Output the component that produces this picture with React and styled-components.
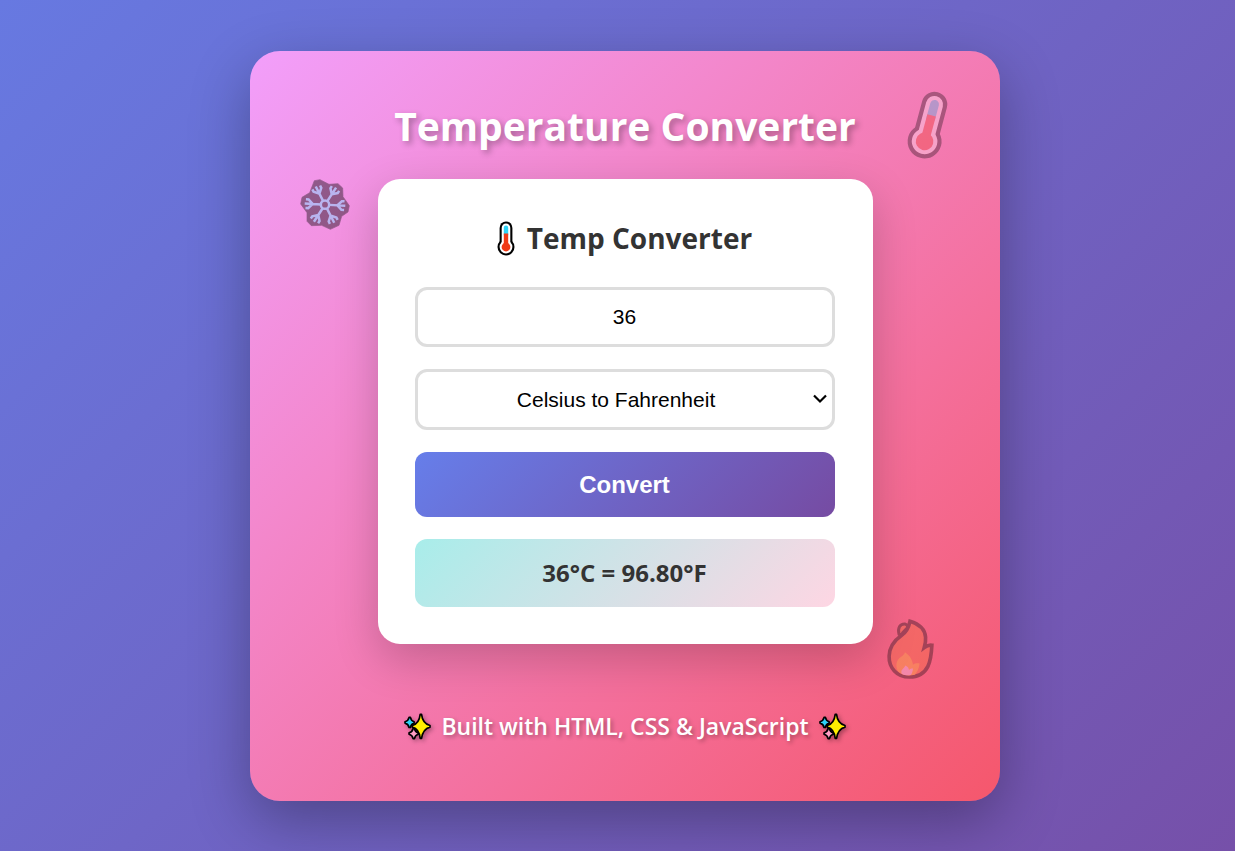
import React, { useState } from "react";
import styled, { createGlobalStyle, css } from "styled-components";

const GlobalStyle = createGlobalStyle`
  * {
    box-sizing: border-box;
    margin: 0;
    padding: 0;
  }
  body {
    font-family: "Segoe UI", "Open Sans", "Noto Sans", sans-serif;
  }
`;

const Page = styled.main`
  display: flex;
  justify-content: center;
  align-items: center;
  min-height: 100vh;
  padding: 51px 0 50px 15px;
  background: linear-gradient(135deg, #6779e1 0%, #7650a9 100%);
`;

const Panel = styled.section`
  position: relative;
  display: flex;
  flex-direction: column;
  align-items: center;
  width: 100%;
  max-width: 750px;
  min-height: 750px;
  padding: 50px 20px;
  border-radius: 30px;
  background: linear-gradient(135deg, #f29ffb 0%, #f5576c 100%);
  box-shadow: 0 20px 60px rgba(0, 0, 0, 0.3);
`;

const Title = styled.h1`
  margin-bottom: 28px;
  color: #fff;
  font-size: 39px;
  line-height: 50px;
  font-weight: 700;
  text-align: center;
  text-shadow: 3px 3px 6px rgba(0, 0, 0, 0.3);
`;

const Card = styled.form`
  display: flex;
  flex-direction: column;
  gap: 22px;
  width: 100%;
  max-width: 495px;
  padding: 37px 38px 37px 37px;
  border-radius: 22px;
  background: #fff;
  box-shadow: 0 15px 45px rgba(0, 0, 0, 0.2);
`;

const CardTitle = styled.h2`
  display: flex;
  align-items: center;
  justify-content: center;
  gap: 12px;
  padding-bottom: 5px;
  color: #333;
  font-size: 28px;
  line-height: 44px;
  font-weight: 700;
`;

const field = css`
  width: 100%;
  border: 3px solid #ddd;
  border-radius: 12px;
  background: #fff;
  color: #000;
  font-family: "Liberation Sans", Arial, sans-serif;
  font-size: 21px;
  line-height: 24px;
  text-align: center;
`;

const NumberInput = styled.input`
  ${field}
  height: 60px;
  padding: 15px;
  appearance: textfield;
  &::-webkit-inner-spin-button {
    appearance: none;
  }
`;

const SelectWrap = styled.div`
  position: relative;
  display: flex;
`;

const Select = styled.select`
  ${field}
  height: 61px;
  padding: 15px 32px 15px 15px;
  appearance: none;
  text-align-last: center;
`;

const Chevron = styled.svg`
  position: absolute;
  top: 24px;
  right: 7px;
  pointer-events: none;
`;

const ConvertButton = styled.button`
  height: 65px;
  border: 0;
  border-radius: 12px;
  background: linear-gradient(135deg, #667eea 0%, #764ba2 100%);
  color: #fff;
  font-family: "Liberation Sans", Arial, sans-serif;
  font-size: 24px;
  font-weight: 700;
  cursor: pointer;
`;

const Result = styled.output`
  display: block;
  padding: 18px;
  border-radius: 12px;
  background: linear-gradient(135deg, #a8edea 0%, #fed6e3 100%);
  color: #333;
  font-size: 24px;
  line-height: 32px;
  font-weight: 700;
  text-align: center;
`;

const Footer = styled.footer`
  display: flex;
  align-items: center;
  gap: 10px;
  margin-top: 62px;
  color: #fff;
  font-size: 23px;
  line-height: 40px;
  font-weight: 600;
  text-shadow: 2px 2px 4px rgba(0, 0, 0, 0.3);
`;

const SparkleSvg = styled.svg`
  flex: none;
  overflow: visible;
  filter: drop-shadow(2px 2px 2px rgba(0, 0, 0, 0.3));
`;

const places = {
  heat: css`
    top: 39px;
    right: 53px;
    opacity: 0.3;
    transform: rotate(15deg);
  `,
  snow: css`
    top: 128px;
    left: 50px;
    opacity: 0.4;
  `,
  fire: css`
    right: 66px;
    bottom: 122px;
    opacity: 0.32;
  `,
};

const Decoration = styled.div`
  position: absolute;
  display: flex;
  pointer-events: none;
  ${({ $place }) => places[$place]}
`;

function Thermometer({ width, height }) {
  return (
    <svg width={width} height={height} viewBox="0 0 18 35" aria-hidden="true">
      <g fill="none" strokeLinecap="round">
        <path d="M9 6.9V26" stroke="#000" strokeWidth="12.8" />
        <circle cx="9" cy="26" r="8.5" fill="#000" />
        <path d="M9 6.9V26" stroke="#fff" strokeWidth="8.6" />
        <circle cx="9" cy="26" r="6.4" fill="#fff" />
        <path d="M9 6.8V14" stroke="#2fd3f7" strokeWidth="4.4" />
      </g>
      <path d="M6.8 12.5h4.4V26H6.8z" fill="#f03a17" />
      <circle cx="9" cy="26" r="4.4" fill="#f03a17" />
    </svg>
  );
}

function Snowflake() {
  return (
    <svg width="50" height="51" viewBox="59 57 150 153" aria-hidden="true">
      <path
        d="M102 62L119 59L146 73L173 71L187 84L188 110L207 137L203 156L184 169L176 196L150 208L124 196L93 197L80 184L80 158L61 132L65 112L88 98Z"
        stroke="#000"
        strokeWidth="2"
        strokeLinejoin="round"
      />
      <g fill="none" stroke="#64e4ff" strokeWidth="7.5">
        <circle cx="134" cy="134" r="12.5" />
        {[-27, 33, 93, 153, 213, 273].map((angle) => (
          <g key={angle} transform={`rotate(${angle} 134 134)`}>
            <path d="M134 122V73M121 76V84L134 97L147 84V76" />
          </g>
        ))}
      </g>
    </svg>
  );
}

function Flame() {
  return (
    <svg width="47" height="60" viewBox="52 57 141 181" aria-hidden="true">
      <path
        d="M121 64C148 72 166 88 168 112C169 123 167 132 164 143C172 137 179 135 187 136C186 158 184 181 175 200C164 222 144 232 119 232C81 232 57 204 58 169C59 140 75 121 95 107C108 98 116 88 121 64Z"
        fill="#f2702c"
        stroke="#000"
        strokeWidth="11"
      />
      <path
        d="M88 104C83 85 90 71 106 72C111 73 113 76 114 80C113 89 99 91 97 104Z"
        fill="#f2702c"
        stroke="#000"
        strokeWidth="9"
        strokeLinejoin="round"
      />
      <path
        d="M92 221C78 211 77 192 85 180C91 170 103 168 106 157C119 166 128 178 130 195C136 190 142 190 150 191C148 206 143 216 135 225C120 229 105 228 92 221Z"
        fill="#ffc020"
      />
      <path
        d="M96 222C91 208 104 207 107 197C115 201 117 205 118 211C121 207 125 206 130 206C129 214 128 220 123 226C112 228 104 227 96 222Z"
        fill="#f5d6ff"
      />
    </svg>
  );
}

function Sparkles() {
  return (
    <SparkleSvg width="27" height="27" viewBox="19 24 80 80" aria-hidden="true">
      <g stroke="#000" strokeWidth="5" strokeLinejoin="round">
        <path d="M34 37H38Q40 47 49 50V54Q40 57 38 67H34Q32 57 22 54V50Q32 47 34 37Z" fill="#2fd3f7" />
        <path d="M46 70H50Q52 80 61 83V87Q52 90 50 100H46Q44 90 34 87V83Q44 80 46 70Z" fill="#ff9fc5" />
        <path d="M67 28H71Q74 55 96 61V66Q75 72 71 99H67Q64 72 44 66V61Q64 55 67 28Z" fill="#ffee00" />
      </g>
    </SparkleSvg>
  );
}

const conversions = {
  cToF: { label: "Celsius to Fahrenheit", from: "°C", to: "°F", run: (t) => (t * 9) / 5 + 32 },
  fToC: { label: "Fahrenheit to Celsius", from: "°F", to: "°C", run: (t) => ((t - 32) * 5) / 9 },
};

const describe = (value, mode) => {
  const { from, to, run } = conversions[mode];
  return `${value}${from} = ${run(Number(value)).toFixed(2)}${to}`;
};

export default function App() {
  const [value, setValue] = useState("36");
  const [mode, setMode] = useState("cToF");
  const [result, setResult] = useState(describe("36", "cToF"));

  const handleSubmit = (event) => {
    event.preventDefault();
    setResult(describe(value, mode));
  };

  return (
    <>
      <GlobalStyle />
      <Page>
        <Panel>
          <Decoration $place="heat">
            <Thermometer width="36" height="70" />
          </Decoration>
          <Decoration $place="snow">
            <Snowflake />
          </Decoration>
          <Decoration $place="fire">
            <Flame />
          </Decoration>
          <Title>Temperature Converter</Title>
          <Card onSubmit={handleSubmit}>
            <CardTitle>
              <Thermometer width="18" height="35" />
              Temp Converter
            </CardTitle>
            <NumberInput
              type="number"
              aria-label="Temperature"
              value={value}
              onChange={(event) => setValue(event.target.value)}
            />
            <SelectWrap>
              <Select
                aria-label="Conversion"
                value={mode}
                onChange={(event) => setMode(event.target.value)}
              >
                {Object.entries(conversions).map(([key, { label }]) => (
                  <option key={key} value={key}>
                    {label}
                  </option>
                ))}
              </Select>
              <Chevron width="16" height="12" viewBox="0 0 16 12" aria-hidden="true">
                <path d="M2 2.5L8 8.5L14 2.5" fill="none" stroke="#000" strokeWidth="2.2" />
              </Chevron>
            </SelectWrap>
            <ConvertButton type="submit">Convert</ConvertButton>
            <Result>{result}</Result>
          </Card>
          <Footer>
            <Sparkles />
            Built with HTML, CSS &amp; JavaScript
            <Sparkles />
          </Footer>
        </Panel>
      </Page>
    </>
  );
}
